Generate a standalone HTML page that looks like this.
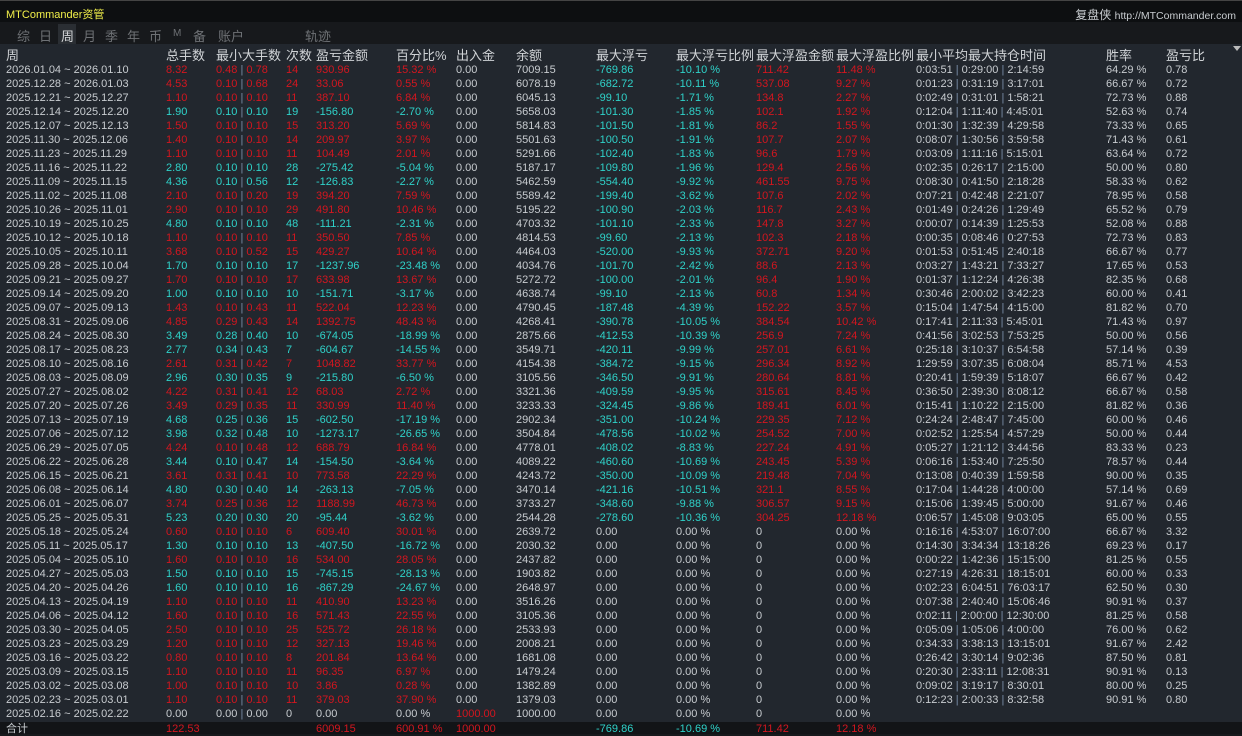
<!DOCTYPE html>
<html><head><meta charset="utf-8">
<style>
*{margin:0;padding:0;box-sizing:border-box}
html,body{width:1242px;height:734px;overflow:hidden;background:#17191c;font-family:"Liberation Sans","Noto Sans CJK SC",sans-serif;}
#top{position:absolute;left:0;top:0;width:1242px;height:22px;background:#0d0f11;border-top:1px solid #444;}
#title{position:absolute;left:6px;top:5px;font-size:11px;color:#f2f04a;}
#site{position:absolute;right:6px;top:5px;font-size:12px;color:#c8ccd0;}
#site span{font-size:10.5px}
#tabs{position:absolute;left:0;top:22px;width:1242px;height:22px;background:#17191c;}
.tab{position:absolute;top:4px;font-size:13px;color:#6e7175;}
#tbl{position:absolute;left:0;top:44px;width:1242px;height:678px;background:#22272e;}
.c{position:absolute;font-size:11px;white-space:nowrap;line-height:14px;color:#c8ccd0}
.h{font-size:13px;color:#d0d3d6;line-height:15px}
.r{color:#d3161f}.b{color:#2fd2c9}
.s{color:#7a8ea8}
#tot{position:absolute;left:0;top:722px;width:1242px;height:12px;background:#121417;}
</style></head><body>
<div id="top"><div id="title">MTCommander资管</div><div id="site">复盘侠 <span>http://MTCommander.com</span></div></div>
<div id="tabs">
<div class="tab" style="left:17px">综</div><div class="tab" style="left:39px">日</div>
<div style="position:absolute;left:58px;top:2px;width:18px;height:20px;background:#2a2e33"></div>
<div class="tab" style="left:61px;color:#d6d8da">周</div><div class="tab" style="left:83px">月</div><div class="tab" style="left:105px">季</div><div class="tab" style="left:127px">年</div><div class="tab" style="left:149px">币</div><div class="tab" style="left:173px;font-size:10px;top:6px">M</div><div class="tab" style="left:193px">备</div><div class="tab" style="left:218px">账户</div><div class="tab" style="left:305px">轨迹</div>
</div>
<div id="tbl"></div>
<div id="tot"></div>
<div style="position:absolute;left:1233px;top:46px;width:0;height:0;border-left:4px solid transparent;border-right:4px solid transparent;border-top:5px solid #bbb"></div>
<div id="cells"></div>
<script>
var X=[6,166,216,286,316,396,456,516,596,676,756,836,916,1106,1166];
var H=["周","总手数","最小大手数","次数","盈亏金额","百分比%","出入金","余额","最大浮亏","最大浮亏比例","最大浮盈金额","最大浮盈比例","最小平均最大持仓时间","胜率","盈亏比"];
var D=`2026.01.04 ~ 2026.01.10|8.32|0.48|0.78|14|930.96|15.32|7009.15|-769.86|-10.10|711.42|11.48|0:03:51|0:29:00|2:14:59|64.29|0.78
2025.12.28 ~ 2026.01.03|4.53|0.10|0.68|24|33.06|0.55|6078.19|-682.72|-10.11|537.08|9.27|0:01:23|0:31:19|3:17:01|66.67|0.72
2025.12.21 ~ 2025.12.27|1.10|0.10|0.10|11|387.10|6.84|6045.13|-99.10|-1.71|134.8|2.27|0:02:49|0:31:01|1:58:21|72.73|0.88
2025.12.14 ~ 2025.12.20|1.90|0.10|0.10|19|-156.80|-2.70|5658.03|-101.30|-1.85|102.1|1.92|0:12:04|1:11:40|4:45:01|52.63|0.74
2025.12.07 ~ 2025.12.13|1.50|0.10|0.10|15|313.20|5.69|5814.83|-101.50|-1.81|86.2|1.55|0:01:30|1:32:39|4:29:58|73.33|0.65
2025.11.30 ~ 2025.12.06|1.40|0.10|0.10|14|209.97|3.97|5501.63|-100.50|-1.91|107.7|2.07|0:08:07|1:30:56|3:59:58|71.43|0.61
2025.11.23 ~ 2025.11.29|1.10|0.10|0.10|11|104.49|2.01|5291.66|-102.40|-1.83|96.6|1.79|0:03:09|1:11:16|5:15:01|63.64|0.72
2025.11.16 ~ 2025.11.22|2.80|0.10|0.10|28|-275.42|-5.04|5187.17|-109.80|-1.96|129.4|2.56|0:02:35|0:26:17|2:15:00|50.00|0.80
2025.11.09 ~ 2025.11.15|4.36|0.10|0.56|12|-126.83|-2.27|5462.59|-554.40|-9.92|461.55|9.75|0:08:30|0:41:50|2:18:28|58.33|0.62
2025.11.02 ~ 2025.11.08|2.10|0.10|0.20|19|394.20|7.59|5589.42|-199.40|-3.62|107.6|2.02|0:07:21|0:42:48|2:21:07|78.95|0.58
2025.10.26 ~ 2025.11.01|2.90|0.10|0.10|29|491.80|10.46|5195.22|-100.90|-2.03|116.7|2.43|0:01:49|0:24:26|1:29:49|65.52|0.79
2025.10.19 ~ 2025.10.25|4.80|0.10|0.10|48|-111.21|-2.31|4703.32|-101.10|-2.33|147.8|3.27|0:00:07|0:14:39|1:25:53|52.08|0.88
2025.10.12 ~ 2025.10.18|1.10|0.10|0.10|11|350.50|7.85|4814.53|-99.60|-2.13|102.3|2.18|0:00:35|0:08:46|0:27:53|72.73|0.83
2025.10.05 ~ 2025.10.11|3.68|0.10|0.52|15|429.27|10.64|4464.03|-520.00|-9.93|372.71|9.20|0:01:53|0:51:45|2:40:18|66.67|0.77
2025.09.28 ~ 2025.10.04|1.70|0.10|0.10|17|-1237.96|-23.48|4034.76|-101.70|-2.42|88.6|2.13|0:03:27|1:43:21|7:33:27|17.65|0.53
2025.09.21 ~ 2025.09.27|1.70|0.10|0.10|17|633.98|13.67|5272.72|-100.00|-2.01|96.4|1.90|0:01:37|1:12:24|4:26:38|82.35|0.68
2025.09.14 ~ 2025.09.20|1.00|0.10|0.10|10|-151.71|-3.17|4638.74|-99.10|-2.13|60.8|1.34|0:30:46|2:00:02|3:42:23|60.00|0.41
2025.09.07 ~ 2025.09.13|1.43|0.10|0.43|11|522.04|12.23|4790.45|-187.48|-4.39|152.22|3.57|0:15:04|1:47:54|4:15:00|81.82|0.70
2025.08.31 ~ 2025.09.06|4.85|0.29|0.43|14|1392.75|48.43|4268.41|-390.78|-10.05|384.54|10.42|0:17:41|2:11:33|5:45:01|71.43|0.97
2025.08.24 ~ 2025.08.30|3.49|0.28|0.40|10|-674.05|-18.99|2875.66|-412.53|-10.39|256.9|7.24|0:41:56|3:02:53|7:53:25|50.00|0.56
2025.08.17 ~ 2025.08.23|2.77|0.34|0.43|7|-604.67|-14.55|3549.71|-420.11|-9.99|257.01|6.61|0:25:18|3:10:37|6:54:58|57.14|0.39
2025.08.10 ~ 2025.08.16|2.61|0.31|0.42|7|1048.82|33.77|4154.38|-384.72|-9.15|296.34|8.92|1:29:59|3:07:35|6:08:04|85.71|4.53
2025.08.03 ~ 2025.08.09|2.96|0.30|0.35|9|-215.80|-6.50|3105.56|-346.50|-9.91|280.64|8.81|0:20:41|1:59:39|5:18:07|66.67|0.42
2025.07.27 ~ 2025.08.02|4.22|0.31|0.41|12|68.03|2.72|3321.36|-409.59|-9.95|315.61|8.45|0:36:50|2:39:30|8:08:12|66.67|0.58
2025.07.20 ~ 2025.07.26|3.49|0.29|0.35|11|330.99|11.40|3233.33|-324.45|-9.86|189.41|6.01|0:15:41|1:10:22|2:15:00|81.82|0.36
2025.07.13 ~ 2025.07.19|4.68|0.25|0.36|15|-602.50|-17.19|2902.34|-351.00|-10.24|229.35|7.12|0:24:24|2:48:47|7:45:00|60.00|0.46
2025.07.06 ~ 2025.07.12|3.98|0.32|0.48|10|-1273.17|-26.65|3504.84|-478.56|-10.02|254.52|7.00|0:02:52|1:25:54|4:57:29|50.00|0.44
2025.06.29 ~ 2025.07.05|4.24|0.10|0.48|12|688.79|16.84|4778.01|-408.02|-8.83|227.24|4.91|0:05:27|1:21:12|3:44:56|83.33|0.23
2025.06.22 ~ 2025.06.28|3.44|0.10|0.47|14|-154.50|-3.64|4089.22|-460.60|-10.69|243.45|5.39|0:06:16|1:53:40|7:25:50|78.57|0.44
2025.06.15 ~ 2025.06.21|3.61|0.31|0.41|10|773.58|22.29|4243.72|-350.00|-10.09|219.48|7.04|0:13:08|0:40:39|1:59:58|90.00|0.35
2025.06.08 ~ 2025.06.14|4.80|0.30|0.40|14|-263.13|-7.05|3470.14|-421.16|-10.51|321.1|8.55|0:17:04|1:44:28|4:00:00|57.14|0.69
2025.06.01 ~ 2025.06.07|3.74|0.25|0.36|12|1188.99|46.73|3733.27|-348.60|-9.88|306.57|9.15|0:15:06|1:39:45|5:00:00|91.67|0.46
2025.05.25 ~ 2025.05.31|5.23|0.20|0.30|20|-95.44|-3.62|2544.28|-278.60|-10.36|304.25|12.18|0:06:57|1:45:08|9:03:05|65.00|0.55
2025.05.18 ~ 2025.05.24|0.60|0.10|0.10|6|609.40|30.01|2639.72|0|0|0|0|0:16:16|4:53:07|16:07:00|66.67|3.32
2025.05.11 ~ 2025.05.17|1.30|0.10|0.10|13|-407.50|-16.72|2030.32|0|0|0|0|0:14:30|3:34:34|13:18:26|69.23|0.17
2025.05.04 ~ 2025.05.10|1.60|0.10|0.10|16|534.00|28.05|2437.82|0|0|0|0|0:00:22|1:42:36|15:15:00|81.25|0.55
2025.04.27 ~ 2025.05.03|1.50|0.10|0.10|15|-745.15|-28.13|1903.82|0|0|0|0|0:27:19|4:26:31|18:15:01|60.00|0.33
2025.04.20 ~ 2025.04.26|1.60|0.10|0.10|16|-867.29|-24.67|2648.97|0|0|0|0|0:02:23|6:04:51|76:03:17|62.50|0.30
2025.04.13 ~ 2025.04.19|1.10|0.10|0.10|11|410.90|13.23|3516.26|0|0|0|0|0:07:38|2:40:40|15:06:46|90.91|0.37
2025.04.06 ~ 2025.04.12|1.60|0.10|0.10|16|571.43|22.55|3105.36|0|0|0|0|0:02:11|2:00:00|12:30:00|81.25|0.58
2025.03.30 ~ 2025.04.05|2.50|0.10|0.10|25|525.72|26.18|2533.93|0|0|0|0|0:05:09|1:05:06|4:00:00|76.00|0.62
2025.03.23 ~ 2025.03.29|1.20|0.10|0.10|12|327.13|19.46|2008.21|0|0|0|0|0:34:33|3:38:13|13:15:01|91.67|2.42
2025.03.16 ~ 2025.03.22|0.80|0.10|0.10|8|201.84|13.64|1681.08|0|0|0|0|0:26:42|3:30:14|9:02:36|87.50|0.81
2025.03.09 ~ 2025.03.15|1.10|0.10|0.10|11|96.35|6.97|1479.24|0|0|0|0|0:20:30|2:33:11|12:08:31|90.91|0.13
2025.03.02 ~ 2025.03.08|1.00|0.10|0.10|10|3.86|0.28|1382.89|0|0|0|0|0:09:02|3:19:17|8:30:01|80.00|0.25
2025.02.23 ~ 2025.03.01|1.10|0.10|0.10|11|379.03|37.90|1379.03|0|0|0|0|0:12:23|2:00:33|8:32:58|90.91|0.80
2025.02.16 ~ 2025.02.22|0.00|0.00|0.00|0|0.00|0.00|1000.00|0|0|0|0||||||`;
var o="";
function cell(x,y,t,cls){o+='<div class="c '+(cls||'')+'" style="left:'+x+'px;top:'+y+'px">'+t+'</div>';}
H.forEach(function(h,i){o+='<div class="c h" style="left:'+X[i]+'px;top:48px">'+h+'</div>';});
var rows=D.split("\n");
rows.forEach(function(line,k){
 var a=line.split("|"),y=63+k*14;
 var pl=parseFloat(a[5]),cc=pl>0?"r":(pl<0?"b":"");
 cell(X[0],y,a[0]);
 cell(X[1],y,a[1],cc);
 cell(X[2],y,'<span class="'+cc+'">'+a[2]+'</span> <span class="s">|</span> <span class="'+cc+'">'+a[3]+'</span>');
 cell(X[3],y,a[4],cc);
 cell(X[4],y,a[5],cc);
 cell(X[5],y,a[6]+' %',cc);
 var last=(k==rows.length-1);
 cell(X[6],y,last?'1000.00':'0.00',last?'r':'');
 cell(X[7],y,a[7]);
 if(a[8]=="0"){cell(X[8],y,'0.00');cell(X[9],y,'0.00 %');cell(X[10],y,'0');cell(X[11],y,'0.00 %');}
 else{cell(X[8],y,a[8],'b');cell(X[9],y,a[9]+' %','b');cell(X[10],y,a[10],'r');cell(X[11],y,a[11]+' %','r');}
 if(a[12]){cell(X[12],y,a[12]+' <span class="s">|</span> '+a[13]+' <span class="s">|</span> '+a[14]);cell(X[13],y,a[15]+' %');cell(X[14],y,a[16]);}
});
var ty=722;
cell(X[0],ty,'合计');cell(X[1],ty,'122.53','r');cell(X[4],ty,'6009.15','r');cell(X[5],ty,'600.91 %','r');cell(X[6],ty,'1000.00','r');
cell(X[8],ty,'-769.86','b');cell(X[9],ty,'-10.69 %','b');cell(X[10],ty,'711.42','r');cell(X[11],ty,'12.18 %','r');
document.getElementById("cells").innerHTML=o;
</script>
</body></html>
